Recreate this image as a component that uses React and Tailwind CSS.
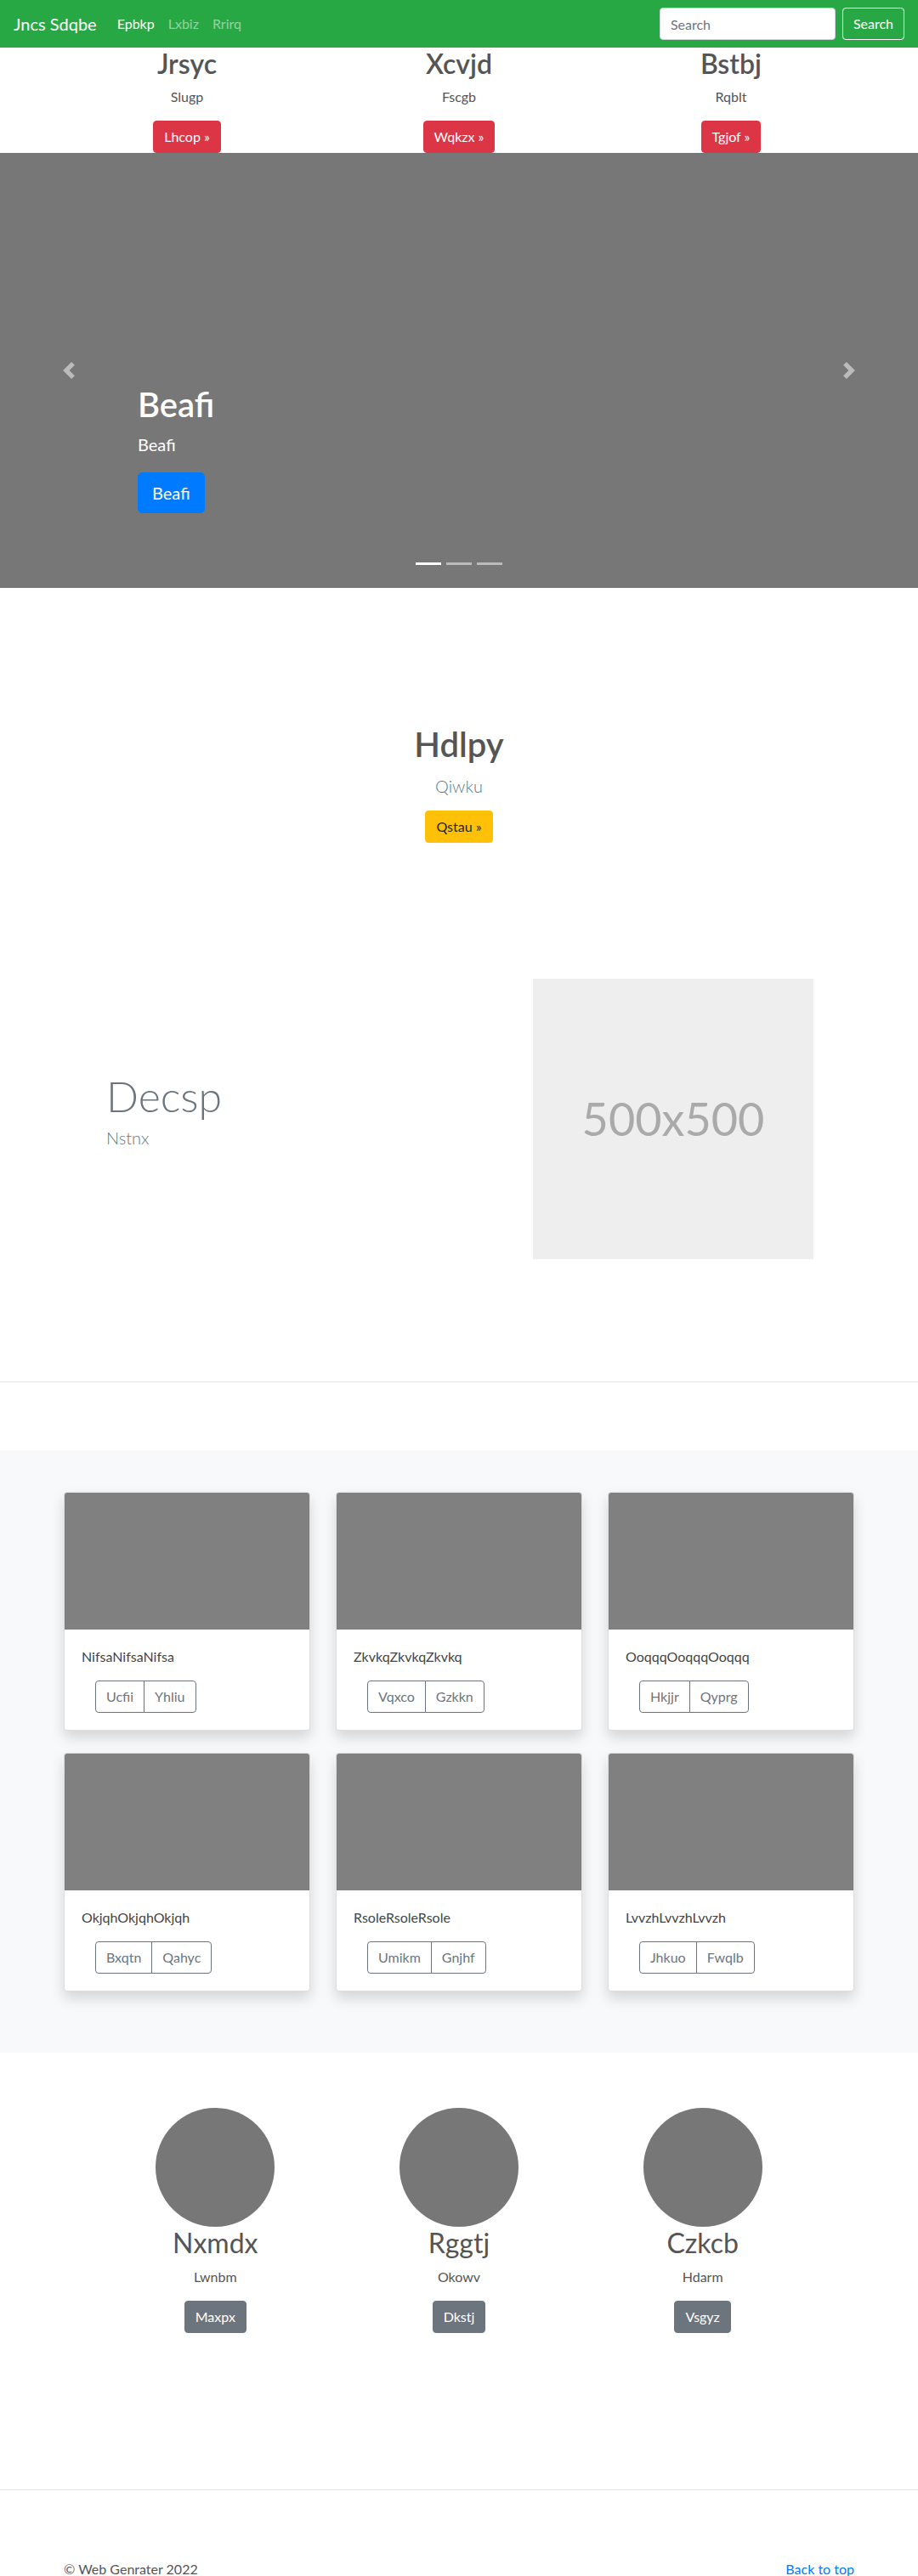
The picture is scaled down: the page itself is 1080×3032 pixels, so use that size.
export default function App() {
  const features = [
    ["Jrsyc", "Slugp", "Lhcop »"],
    ["Xcvjd", "Fscgb", "Wqkzx »"],
    ["Bstbj", "Rqblt", "Tgjof »"],
  ];
  const cards = [
    ["NifsaNifsaNifsa", "Ucfii", "Yhliu"],
    ["ZkvkqZkvkqZkvkq", "Vqxco", "Gzkkn"],
    ["OoqqqOoqqqOoqqq", "Hkjjr", "Qyprg"],
    ["OkjqhOkjqhOkjqh", "Bxqtn", "Qahyc"],
    ["RsoleRsoleRsole", "Umikm", "Gnjhf"],
    ["LvvzhLvvzhLvvzh", "Jhkuo", "Fwqlb"],
  ];
  const team = [
    ["Nxmdx", "Lwnbm", "Maxpx"],
    ["Rggtj", "Okowv", "Dkstj"],
    ["Czkcb", "Hdarm", "Vsgyz"],
  ];
  return (
    <div className="bg-white font-[Lato,'Open_Sans',sans-serif] text-base leading-6 text-[#212529]">
      {/* Navbar */}
      <nav className="h-14 bg-[#28a745] flex items-center px-4">
        <span className="text-[20px] leading-[30px] text-white mr-4">Jncs Sdqbe</span>
        <div className="flex">
          <span className="px-2 text-white">Epbkp</span>
          <span className="px-2 text-white/50">Lxbiz</span>
          <span className="px-2 text-white/50">Rrirq</span>
        </div>
        <div className="ml-auto flex items-center gap-2">
          <input
            placeholder="Search"
            className="w-[207px] h-[38px] rounded-[4px] border border-[#ced4da] bg-white px-3 text-base text-[#495057] placeholder:text-[#6c757d] outline-none"
          />
          <button className="h-[38px] px-3 rounded-[4px] border border-white text-white text-base">Search</button>
        </div>
      </nav>

      {/* Features */}
      <div className="w-[960px] mx-auto px-[15px] grid grid-cols-3 gap-[30px]">
        {features.map(([h, p, b]) => (
          <div key={h} className="flex flex-col items-center text-center">
            <h2 className="text-[32px] leading-[38.4px] font-semibold text-[#555] mb-2">{h}</h2>
            <p className="text-[#555] mb-4">{p}</p>
            <span className="inline-block bg-[#dc3545] text-white px-3 py-[6px] leading-6 rounded-[4px] border border-[#dc3545]">{b}</span>
          </div>
        ))}
      </div>

      {/* Carousel */}
      <div className="relative h-[512px] bg-[#777]">
        <div className="absolute left-0 top-0 h-full w-[15%] flex items-center justify-center opacity-50">
          <svg width="20" height="20" viewBox="0 0 8 8" fill="#fff">
            <path d="M5.25 0l-4 4 4 4 1.5-1.5L4.25 4l2.5-2.5L5.25 0z" />
          </svg>
        </div>
        <div className="absolute right-0 top-0 h-full w-[15%] flex items-center justify-center opacity-50">
          <svg width="20" height="20" viewBox="0 0 8 8" fill="#fff">
            <path d="M2.75 0l-1.5 1.5L3.75 4l-2.5 2.5L2.75 8l4-4-4-4z" />
          </svg>
        </div>
        <div className="absolute left-[162px] top-[272px] text-white">
          <h1 className="text-[40px] leading-[48px] font-semibold mb-2">Beafi</h1>
          <p className="text-[20px] leading-[30px] mb-[18px]">Beafi</p>
          <span className="inline-block bg-[#007bff] text-white text-[20px] leading-[30px] px-4 py-2 rounded-[5px] border border-[#007bff]">Beafi</span>
        </div>
        <div className="absolute left-0 right-0 bottom-[27px] flex justify-center">
          <span className="w-[30px] h-[3px] mx-[3px] bg-white"></span>
          <span className="w-[30px] h-[3px] mx-[3px] bg-white/50"></span>
          <span className="w-[30px] h-[3px] mx-[3px] bg-white/50"></span>
        </div>
      </div>

      {/* Jumbotron */}
      <section className="pt-[160px] flex flex-col items-center text-center">
        <h1 className="text-[40px] leading-[48px] font-semibold text-[#555] mb-[10px]">Hdlpy</h1>
        <p className="text-[20px] leading-[30px] font-light text-[#6c757d] mb-[14px]">Qiwku</p>
        <span className="inline-block bg-[#ffc107] text-[#212529] px-3 py-[6px] leading-6 rounded-[4px] border border-[#ffc107]">Qstau »</span>
      </section>

      {/* Featurette */}
      <section className="mt-[160px] w-[960px] mx-auto flex items-start">
        <div className="flex-1 pl-[65px] pt-[108px]">
          <h2 className="text-[50px] leading-[60px] font-light text-[#6c757d] mb-1">Decsp</h2>
          <p className="text-[20px] leading-[30px] font-light text-[#6c757d]">Nstnx</p>
        </div>
        <div className="w-[330px] h-[330px] mr-[63px] bg-[#eee] flex items-center justify-center">
          <span className="text-[54px] text-[#aaa]">500x500</span>
        </div>
      </section>

      <hr className="mt-[144px] border-0 border-t border-[#e5e5e5]" />

      {/* Album */}
      <section className="mt-[80px] bg-[#f8f9fa] pt-[49px] pb-[72px]">
        <div className="w-[930px] mx-auto grid grid-cols-3 gap-x-[30px] gap-y-[26px]">
          {cards.map(([t, a, b]) => (
            <div key={t} className="bg-white border border-black/[0.125] rounded-[4px] overflow-hidden shadow-[0_8px_16px_rgba(0,0,0,0.15)]">
              <div className="h-[161px] bg-[#808080]"></div>
              <div className="p-5">
                <p className="text-[#444] mb-4">{t}</p>
                <div className="ml-4 inline-flex">
                  <span className="border border-[#6c757d] text-[#6c757d] px-3 py-[6px] leading-6 rounded-l-[4px]">{a}</span>
                  <span className="-ml-px border border-[#6c757d] text-[#6c757d] px-3 py-[6px] leading-6 rounded-r-[4px]">{b}</span>
                </div>
              </div>
            </div>
          ))}
        </div>
      </section>

      {/* Marketing */}
      <section className="mt-[65px] w-[860px] mx-auto grid grid-cols-3">
        {team.map(([h, p, b]) => (
          <div key={h} className="flex flex-col items-center text-center">
            <div className="w-[140px] h-[140px] rounded-full bg-[#777]"></div>
            <h2 className="text-[32px] leading-[38.4px] font-normal text-[#555] mb-2">{h}</h2>
            <p className="text-[#555] mb-4">{p}</p>
            <span className="inline-block bg-[#6c757d] text-white px-3 py-[6px] leading-6 rounded-[4px] border border-[#6c757d]">{b}</span>
          </div>
        ))}
      </section>

      <hr className="mt-[184px] border-0 border-t border-[#e5e5e5]" />

      <footer className="w-[930px] mx-auto flex justify-between pt-[81px] pb-12">
        <p className="text-[#555]">© Web Genrater 2022</p>
        <p className="text-[#007bff]">Back to top</p>
      </footer>
    </div>
  );
}
